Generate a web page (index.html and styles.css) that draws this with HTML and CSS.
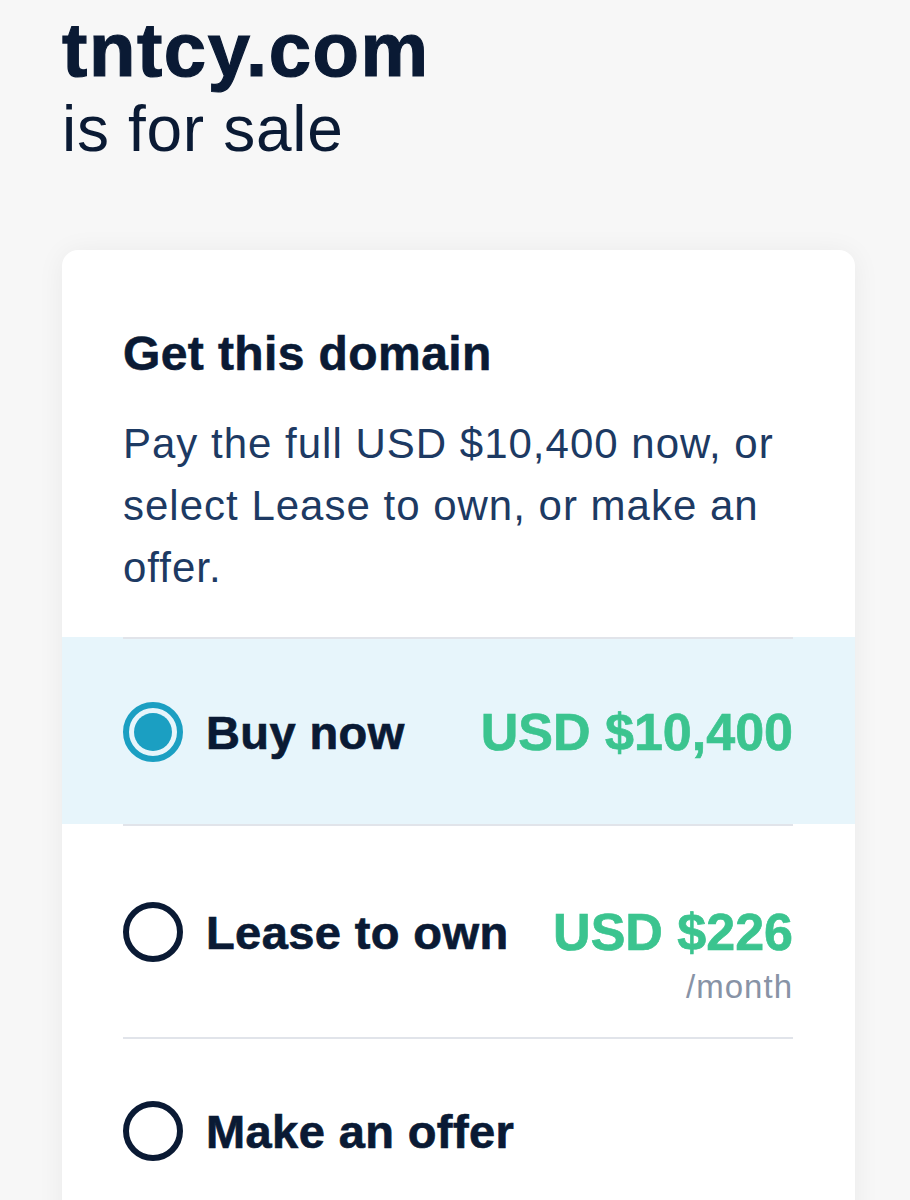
FILE: index.html
```html
<!DOCTYPE html>
<html lang="en">
<head>
  <meta charset="UTF-8">
  <title>tntcy.com is for sale</title>
  <link rel="stylesheet" href="styles.css">
</head>
<body>

<header class="domain">
  <h1 class="domain-name">tntcy.com</h1>
  <p class="domain-sub">is for sale</p>
</header>

<section class="card">
  <h2 class="card-title">Get this domain</h2>
  <p class="card-text">Pay the full USD $10,400 now, or select Lease to own, or make an offer.</p>

  <!-- opciones de compra -->
  <div class="option selected">
    <div class="option-inner">
      <div class="option-main">
        <span class="radio"></span>
        <span class="option-label">Buy now</span>
        <span class="price">USD $10,400</span>
      </div>
    </div>
  </div>

  <div class="option lease">
    <div class="option-inner">
      <div class="option-main">
        <span class="radio"></span>
        <span class="option-label">Lease to own</span>
        <span class="price">USD $226</span>
      </div>
      <div class="per">/month</div>
    </div>
  </div>

  <div class="option last">
    <div class="option-inner">
      <div class="option-main">
        <span class="radio"></span>
        <span class="option-label">Make an offer</span>
      </div>
    </div>
  </div>
</section>

</body>
</html>
```

FILE: styles.css
```css
body { margin: 0; padding: 12px 55px 40px 62px; background: #f7f7f7; font-family: "Liberation Sans", Arial, sans-serif; color: #0a1a34; }
.domain { margin-bottom: 89px; }
.domain-name { margin: 0; font-size: 76px; line-height: 76px; font-weight: bold; letter-spacing: 1.6px; -webkit-text-stroke: 1.2px #0a1a34; }
.domain-sub { margin: 9px 0 0; font-size: 64px; line-height: 64px; letter-spacing: 0.7px; }

.card { background: #fff; border-radius: 16px; box-shadow: 0 2px 28px rgba(0, 0, 0, 0.06); padding-top: 75px; padding-bottom: 40px; }
.card-title { margin: 0 62px 31px 61px; font-size: 48px; line-height: 57px; font-weight: bold; letter-spacing: 0.4px; -webkit-text-stroke: 0.6px #0a1a34; }
.card-text { margin: 0 62px 38px 61px; font-size: 42px; line-height: 62px; letter-spacing: 1px; color: #1d3a63; }

.option-inner { margin: 0 62px 0 61px; padding: 62px 0 61px; border-top: 2px solid #e1e4ea; }
.option.selected { background: #e7f5fb; }
.option.lease .option-inner { padding: 75px 0 32px; }
.option.last .option-inner { padding-top: 61px; }
.option-main { display: flex; align-items: center; height: 62px; }
.radio { width: 48px; height: 48px; border: 6px solid #0a1a34; border-radius: 50%; flex-shrink: 0; position: relative; }
.selected .radio { border-color: #1b9fc2; }
.selected .radio::after { content: ""; position: absolute; top: 5px; left: 5px; width: 38px; height: 38px; border-radius: 50%; background: #1b9fc2; }
.option-label { margin-left: 23px; font-size: 47px; font-weight: bold; letter-spacing: 0.4px; -webkit-text-stroke: 0.7px #0a1a34; }
.price { margin-left: auto; font-size: 52px; font-weight: bold; color: #3bc48f; -webkit-text-stroke: 0.7px #3bc48f; }
.per { margin-top: 6px; text-align: right; font-size: 33px; line-height: 36px; letter-spacing: 1px; color: #8893a6; }
```
